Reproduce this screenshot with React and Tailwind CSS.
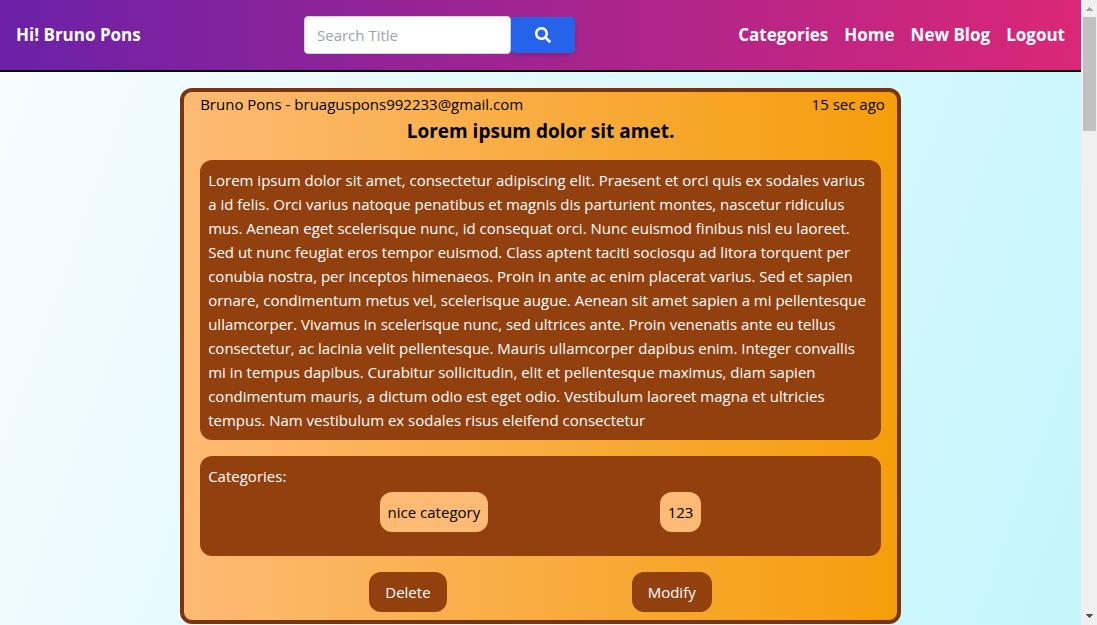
import { FaSearch } from 'react-icons/fa';

const body =
  'Lorem ipsum dolor sit amet, consectetur adipiscing elit. Praesent et orci quis ex sodales varius a id felis. Orci varius natoque penatibus et magnis dis parturient montes, nascetur ridiculus mus. Aenean eget scelerisque nunc, id consequat orci. Nunc euismod finibus nisl eu laoreet. Sed ut nunc feugiat eros tempor euismod. Class aptent taciti sociosqu ad litora torquent per conubia nostra, per inceptos himenaeos. Proin in ante ac enim placerat varius. Sed et sapien ornare, condimentum metus vel, scelerisque augue. Aenean sit amet sapien a mi pellentesque ullamcorper. Vivamus in scelerisque nunc, sed ultrices ante. Proin venenatis ante eu tellus consectetur, ac lacinia velit pellentesque. Mauris ullamcorper dapibus enim. Integer convallis mi in tempus dapibus. Curabitur sollicitudin, elit et pellentesque maximus, diam sapien condimentum mauris, a dictum odio est eget odio. Vestibulum laoreet magna et ultricies tempus. Nam vestibulum ex sodales risus eleifend consectetur';

const links = ['Categories', 'Home', 'New Blog', 'Logout'];

function Header() {
  return (
    <header className="flex items-center justify-between border-b-2 border-black bg-[linear-gradient(to_right,#6b21a8,#db2777)] p-4 text-[17px] font-bold text-white">
      <h1>Hi! Bruno Pons</h1>
      <form className="flex items-center" onSubmit={(e) => e.preventDefault()}>
        <input
          type="text"
          aria-label="Search Title"
          placeholder="Search Title"
          className="h-[38px] w-[207px] rounded border border-[#d1d5db] bg-white px-3 text-[15px] font-normal text-gray-700 placeholder:text-[#9ca3af]"
        />
        <button
          type="submit"
          aria-label="Search"
          className="flex h-9 w-16 items-center justify-center rounded bg-[#2563eb] shadow-md"
        >
          <FaSearch className="size-4" />
        </button>
      </form>
      <nav className="flex gap-4">
        {links.map((l) => (
          <a key={l} href="#">
            {l}
          </a>
        ))}
      </nav>
    </header>
  );
}

function Post() {
  return (
    <article className="mx-auto mt-4 w-2/3 rounded-xl border-4 border-[#78350f] bg-[linear-gradient(to_right,#fdba74,#f59e0b)] pr-3 pb-2 pl-4">
      <div className="flex justify-between">
        <p>Bruno Pons - bruaguspons992233@gmail.com</p>
        <p>15 sec ago</p>
      </div>
      <h2 className="mr-1 text-center text-[19px] leading-[30px] font-bold">Lorem ipsum dolor sit amet.</h2>
      <p className="mt-3.5 mr-1 rounded-xl bg-[#92400e] p-2 text-white">{body}</p>
      <section className="mt-4 mr-1 h-[100px] rounded-xl bg-[#92400e] p-2 text-white">
        <h3>Categories:</h3>
        <ul className="mt-1 flex justify-evenly text-black">
          <li className="rounded-xl bg-[#fdba74] p-2">nice category</li>
          <li className="rounded-xl bg-[#fdba74] p-2">123</li>
        </ul>
      </section>
      <div className="mt-4 mr-1 flex justify-evenly text-white">
        <button type="button" className="mx-4 rounded-xl bg-[#92400e] px-4 py-2">
          Delete
        </button>
        <button type="button" className="mx-4 rounded-xl bg-[#92400e] px-4 py-2">
          Modify
        </button>
      </div>
    </article>
  );
}

function ScrollBar() {
  return (
    <div aria-hidden="true" className="flex w-4 shrink-0 flex-col items-center bg-[#f0f0f0]">
      <svg className="h-[17px] w-4 shrink-0" viewBox="0 0 16 17" shapeRendering="crispEdges">
        <path d="M5 11h7v-1h-1V9h-1V8H9V7H8v1H7v1H6v1H5z" fill="#a3a3a3" />
      </svg>
      <div className="h-[114px] w-[13px] bg-[#c1c1c1]" />
      <svg className="mt-auto h-[17px] w-4 shrink-0" viewBox="0 0 16 17" shapeRendering="crispEdges">
        <path d="M5 6h7v1h-1v1h-1v1H9v1H8V9H7V8H6V7H5z" fill="#505050" />
      </svg>
    </div>
  );
}

export default function App() {
  return (
    <div className="flex h-screen overflow-hidden font-['Open_Sans','Noto_Sans',sans-serif] text-[15px] leading-6 text-black">
      <div className="min-w-0 flex-1 bg-[linear-gradient(110deg,#f8fcff,#c4f6fc)]">
        <Header />
        <main>
          <Post />
        </main>
      </div>
      <ScrollBar />
    </div>
  );
}
